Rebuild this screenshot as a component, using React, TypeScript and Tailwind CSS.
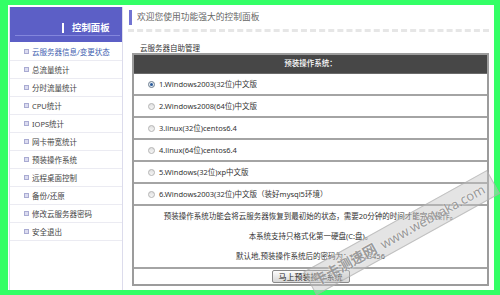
import React, { useState } from 'react'

const menu = [
  '云服务器信息/变更状态',
  '总流量统计',
  '分时流量统计',
  'CPU统计',
  'IOPS统计',
  '网卡带宽统计',
  '预装操作系统',
  '远程桌面控制',
  '备份/还原',
  '修改云服务器密码',
  '安全退出',
]

const systems = [
  '1.Windows2003(32位)中文版',
  '2.Windows2008(64位)中文版',
  '3.linux(32位)centos6.4',
  '4.linux(64位)centos6.4',
  '5.Windows(32位)xp中文版',
  '6.Windows2003(32位)中文版（装好mysql5环境）',
]

function Radio({ checked }: { checked: boolean }) {
  return (
    <span
      className={`w-[7px] h-[7px] rounded-full border shrink-0 flex items-center justify-center ${
        checked ? 'border-[#6f7f90] bg-[#e4ebf2]' : 'border-[#b4b4b4] bg-gradient-to-b from-[#e0e0e0] to-[#f6f6f6]'
      }`}
    >
      {checked && <span className="w-[3px] h-[3px] rounded-full bg-[#2a5a9a]" />}
    </span>
  )
}

function Sidebar() {
  return (
    <div className="w-[114px] h-full shrink-0 border-x border-[#dcdcec] bg-white flex flex-col">
      <div className="h-[35px] bg-[#5c5fc6] pt-[16px] flex flex-col">
        <div className="flex items-center h-[10px]">
          <span className="ml-[52px] w-[2px] h-[10px] bg-white" />
          <span className="ml-[8px] text-[9.4px] leading-[10px] font-bold text-white">控制面板</span>
        </div>
        <div className="mt-[2px] ml-[5px] mr-[2px] h-px bg-[#8386dc]" />
      </div>
      <div className="flex flex-col pt-px">
        {menu.map((item, i) => (
          <div key={item} className="h-[18px] flex items-center border-b border-[#ebebf2]">
            <span className="ml-[14px] w-[5px] h-[5px] border border-[#a9abd2] bg-[#dcdcf0] shrink-0" />
            <span
              className={`ml-[3px] text-[7.5px] leading-[10px] whitespace-nowrap ${
                i === 0 ? 'text-[#3f5fb0]' : 'text-[#444]'
              }`}
            >
              {item}
            </span>
          </div>
        ))}
      </div>
    </div>
  )
}

export default function App() {
  const [picked, setPicked] = useState(0)

  return (
    <div
      className="relative w-[500px] h-[295px] overflow-hidden bg-[#33ff66] pt-[5px] pl-[8px] pr-[6px] pb-[5px]"
      style={{ fontFamily: '"Noto Sans", "Noto Sans CJK SC", sans-serif' }}
    >
      <div className="h-full bg-white flex pt-[2px] pl-px">
        <Sidebar />

        <div className="flex-1 ml-[5px] pr-[5px] pt-[3px] flex flex-col">
          {/* title */}
          <div className="ml-px h-[15px] border-l-[3px] border-[#7274d2] pl-[5px] text-[8.75px] leading-[15px] text-[#666] whitespace-nowrap">
            欢迎您使用功能强大的控制面板
          </div>
          <div className="mt-[4px] border-t-[3px] border-dashed border-[#e6e6e6]" />

          <div className="mt-[11px] ml-[12px] text-[7.5px] leading-[10px] text-[#333]">云服务器自助管理</div>

          {/* table */}
          <div className="ml-[4px] border-2 border-[#9c9c9c] flex flex-col text-[7.5px] text-[#333]">
            <div className="h-[19px] bg-[#474747] border-b border-[#6a6a6a] flex items-center justify-center text-white font-medium">
              预装操作系统：
            </div>
            {systems.map((name, i) => (
              <div
                key={name}
                onClick={() => setPicked(i)}
                className="h-[22px] flex items-center border-b-2 border-[#a4a4a4] cursor-pointer"
              >
                <span className="ml-[14px]">
                  <Radio checked={picked === i} />
                </span>
                <span className="ml-[4px] leading-[10px] whitespace-nowrap">{name}</span>
              </div>
            ))}
            <div className="flex flex-col items-center leading-[20px] border-b-2 border-[#a4a4a4] pb-px">
              <div className="whitespace-nowrap">预装操作系统功能会将云服务器恢复到最初始的状态，需要20分钟的时间才能完成操作。</div>
              <div className="whitespace-nowrap">本系统支持只格式化第一硬盘(C:盘)。</div>
              <div className="whitespace-nowrap">默认地,预装操作系统后的密码为：hk123456</div>
            </div>
            <div className="h-[15px] flex items-center justify-center">
              <button
                type="button"
                className="h-[13px] px-[6px] border border-[#8a8a8a] rounded-[2px] bg-gradient-to-b from-[#fdfdfd] to-[#d6d6d6] text-[8px] leading-[11px] text-[#222]"
              >
                马上预装操作系统
              </button>
            </div>
          </div>
        </div>
      </div>

      {/* watermark */}
      <div className="absolute left-[277px] top-[170px] w-[210px] h-[27px] origin-top-right rotate-[-29deg] bg-[#c4c4c4]/45 border border-[#a8a8a8]/60 flex items-center pl-[4px] whitespace-nowrap text-[14px] leading-[16px] text-[#8e8e8e]/90 [text-shadow:0_0_2px_#fff]">
        <span className="font-bold">卡卡测速网</span>
        <span className="ml-[6px] text-[13px]">www.webkaka.com</span>
      </div>
    </div>
  )
}
